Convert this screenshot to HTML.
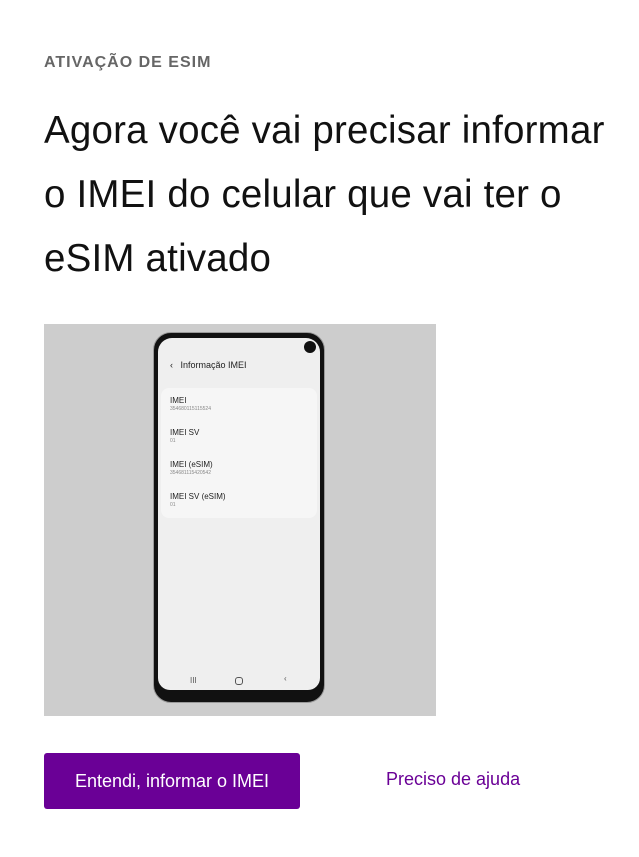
<!DOCTYPE html>
<html><head><meta charset="utf-8"><style>
body{margin:0;background:#fff;width:639px;height:857px;overflow:hidden;font-family:"Liberation Sans",sans-serif;position:relative}
.lbl{position:absolute;left:44px;top:54px;font-size:16px;font-weight:bold;color:#666;letter-spacing:1px}
h1{position:absolute;left:44px;top:99px;margin:0;font-weight:normal;font-size:38.5px;line-height:64px;color:#111;width:585px;letter-spacing:0.2px}
.img{position:absolute;left:44px;top:324px;width:392px;height:392px;background:#cdcdcd}
.phone{position:absolute;left:109px;top:8px;width:172px;height:371px;background:#111;border-radius:18px;border:1px solid #999;box-sizing:border-box}
.screen{position:absolute;left:4px;top:5px;width:162px;height:352px;background:#efefef;border-radius:14px 14px 12px 12px}
.t{position:absolute;font-size:8px;color:#222}
.s{position:absolute;font-size:5px;color:#888}
.card{position:absolute;left:3px;top:50px;width:156px;height:130px;background:#f6f6f6;border-radius:8px}
.btn{position:absolute;left:44px;top:753px;width:256px;height:56px;background:#6a0096;border-radius:3px;color:#fff;font-size:18px;text-align:center;line-height:56px}
.help{position:absolute;left:386px;top:769px;font-size:18px;color:#6a0096}
</style></head><body>
<div class="lbl">ATIVAÇÃO DE ESIM</div>
<h1>Agora você vai precisar informar o IMEI do celular que vai ter o eSIM ativado</h1>
<div class="img"><div class="phone"><div class="screen">
<div style="position:absolute;right:4px;top:3px;width:12px;height:12px;border-radius:50%;background:#111"></div>
<div class="t" style="left:12px;top:22px;font-size:9px">‹&nbsp;&nbsp; Informação IMEI</div>
<div class="card">
<div class="t" style="left:9px;top:8px">IMEI</div><div class="s" style="left:9px;top:18px">354680115115524</div>
<div class="t" style="left:9px;top:40px">IMEI SV</div><div class="s" style="left:9px;top:50px">01</div>
<div class="t" style="left:9px;top:72px">IMEI (eSIM)</div><div class="s" style="left:9px;top:82px">354681115420542</div>
<div class="t" style="left:9px;top:104px">IMEI SV (eSIM)</div><div class="s" style="left:9px;top:114px">01</div>
</div>
<div class="t" style="left:32px;top:338px;color:#555">III</div>
<div style="position:absolute;left:77px;top:339px;width:6px;height:6px;border:1px solid #555;border-radius:3px"></div>
<div class="t" style="left:126px;top:336px;color:#555">‹</div>
</div></div></div>
<div class="btn">Entendi, informar o IMEI</div>
<div class="help">Preciso de ajuda</div>
</body></html>
